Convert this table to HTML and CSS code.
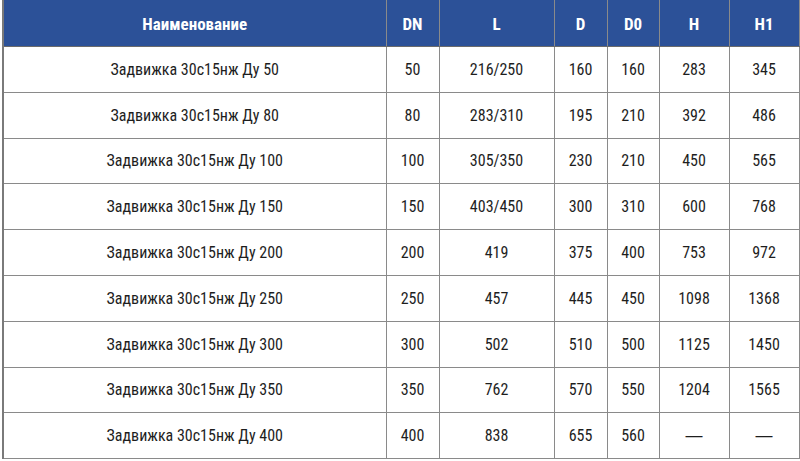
FILE: index.html
```html
<!DOCTYPE html>
<html lang="ru">
<head>
<meta charset="utf-8">
<link rel="stylesheet" href="styles.css">
</head>
<body>
<table class="spec">
  <colgroup>
    <col class="c-name"><col class="c-dn"><col class="c-l"><col class="c-d"><col class="c-d0"><col class="c-h"><col class="c-h1">
  </colgroup>
  <thead>
    <tr><th>Наименование</th><th>DN</th><th>L</th><th>D</th><th>D0</th><th>H</th><th>H1</th></tr>
  </thead>
  <tbody>
    <tr><td>Задвижка 30с15нж Ду 50</td><td>50</td><td>216/250</td><td>160</td><td>160</td><td>283</td><td>345</td></tr>
    <tr><td>Задвижка 30с15нж Ду 80</td><td>80</td><td>283/310</td><td>195</td><td>210</td><td>392</td><td>486</td></tr>
    <tr><td>Задвижка 30с15нж Ду 100</td><td>100</td><td>305/350</td><td>230</td><td>210</td><td>450</td><td>565</td></tr>
    <tr><td>Задвижка 30с15нж Ду 150</td><td>150</td><td>403/450</td><td>300</td><td>310</td><td>600</td><td>768</td></tr>
    <tr><td>Задвижка 30с15нж Ду 200</td><td>200</td><td>419</td><td>375</td><td>400</td><td>753</td><td>972</td></tr>
    <tr><td>Задвижка 30с15нж Ду 250</td><td>250</td><td>457</td><td>445</td><td>450</td><td>1098</td><td>1368</td></tr>
    <tr><td>Задвижка 30с15нж Ду 300</td><td>300</td><td>502</td><td>510</td><td>500</td><td>1125</td><td>1450</td></tr>
    <tr><td>Задвижка 30с15нж Ду 350</td><td>350</td><td>762</td><td>570</td><td>550</td><td>1204</td><td>1565</td></tr>
    <tr><td>Задвижка 30с15нж Ду 400</td><td>400</td><td>838</td><td>655</td><td>560</td><td class="dash">—</td><td class="dash">—</td></tr>
  </tbody>
</table>
</body>
</html>
```

FILE: styles.css
```css
html, body {
  margin: 0;
  padding: 0;
  background: #ffffff;
}
body {
  padding: 0 2px;
  font-family: "Roboto Condensed", "Roboto", sans-serif;
  font-stretch: condensed;
}
.spec {
  border-collapse: collapse;
  width: 796px;
  table-layout: fixed;
  color: #1e1e1e;
}
.c-name { width: 383px; }
.c-dn { width: 53px; }
.c-l { width: 115px; }
.c-d { width: 53px; }
.c-d0 { width: 52px; }
.c-h { width: 70px; }
.c-h1 { width: 70px; }
.spec th, .spec td {
  border: 1px solid #8a8a8a;
  text-align: center;
  padding: 0;
}
.spec thead tr { height: 46px; }
.spec th {
  background: #2c5198;
  color: #ffffff;
  font-weight: bold;
  font-size: 17px;
  border-color: #2c5198 #8a8a8a #6b6b6b #8a8a8a;
}
.spec tbody tr { height: 45.8px; }
.spec td {
  font-size: 16px;
}
.spec td.dash {
  font-family: "Liberation Sans", sans-serif;
  font-stretch: normal;
  font-size: 17px;
}
.spec tbody td:first-child,
.spec thead th:first-child { border-left: 2px solid #7a7a7a; }
```
